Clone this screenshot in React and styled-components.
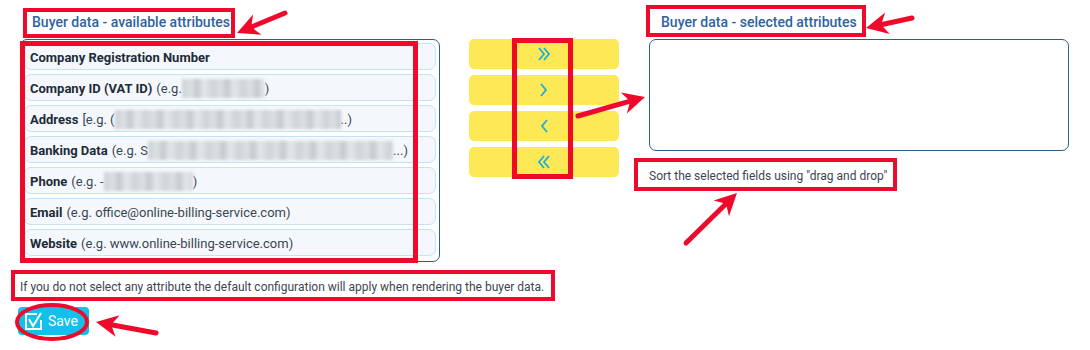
import React from "react"
import styled, { createGlobalStyle } from "styled-components"

const c = {
  BLUE: "#2c5d92",
  TITLE: "#2f62a0",
  TEXT: "#1e2b38",
  MUTED: "#3a4652",
  ROW_BG: "#f4f8fc",
  ROW_BORDER: "#c4e2f3",
  YELLOW: "#fde955",
  CYAN: "#1aaee0",
  SAVE: "#12c0ec",
  RED: "#ef0a2c",
  FONT: "Roboto, 'Liberation Sans', sans-serif",
}

const GlobalStyle = createGlobalStyle`
  body {
    margin: 0;
    background: #fff;
    font-family: ${c.FONT};
  }
`

const Page = styled.div`
  position: relative;
  width: 1090px;
  height: 350px;
  padding-left: 20px;
  box-sizing: border-box;
  overflow: hidden;
`

const Columns = styled.div`
  display: flex;
  align-items: flex-start;
`

const Column = styled.div`
  width: ${p => p.$width}px;
  margin-right: ${p => p.$gap || 0}px;
`

const Title = styled.div`
  padding: 13px 0 8px 12px;
  line-height: 18px;
  font-size: 14px;
  font-weight: 500;
  color: ${c.TITLE};
`

const Panel = styled.div`
  display: flex;
  flex-direction: column;
  gap: 4px;
  padding: 3px 3px 5px;
  border: 1px solid ${c.BLUE};
  border-radius: 7px;
  height: ${p => p.$height}px;
  box-sizing: border-box;
`

const Row = styled.div`
  display: flex;
  align-items: center;
  gap: 4px;
  height: 27px;
  padding: 1px 0 0 5px;
  box-sizing: border-box;
  background: ${c.ROW_BG};
  border: 1px solid ${c.ROW_BORDER};
  border-radius: 7px;
  font-size: 13px;
  color: ${c.MUTED};
  white-space: nowrap;
`

const Label = styled.b`
  font-weight: 700;
  color: ${c.TEXT};
`

const Example = styled.span`
  display: inline-flex;
  align-items: center;
`

const Blur = styled.span`
  display: inline-block;
  width: ${p => p.$width}px;
  height: 19px;
  background: repeating-linear-gradient(
    90deg,
    #ccd2d5 0px,
    #dce0e3 9px,
    #c2c9cd 15px,
    #e4e7e9 22px,
    #d0d6d9 30px
  );
  filter: blur(1.4px);
`

const Buttons = styled.div`
  display: flex;
  flex-direction: column;
  gap: 6px;
  padding-top: 39px;
`

const MoveButton = styled.button`
  display: flex;
  align-items: center;
  justify-content: center;
  height: 30px;
  border: 0;
  border-radius: 5px;
  background: ${c.YELLOW};
  padding: 0;
`

const Target = styled.div`
  height: 112px;
  border: 1px solid ${c.BLUE};
  border-radius: 7px;
  box-sizing: border-box;
`

const Hint = styled.div`
  font-size: 12px;
  color: ${c.MUTED};
  line-height: 16px;
  padding-top: ${p => p.$top}px;
`

const SaveButton = styled.button`
  display: flex;
  align-items: center;
  gap: 4px;
  margin: 12px 0 0 -2px;
  height: 28px;
  padding: 0 11px 0 6px;
  border: 0;
  border-radius: 4px;
  background: ${c.SAVE};
  color: #fff;
  font-family: ${c.FONT};
  font-size: 14px;
`

const Overlay = styled.svg`
  position: absolute;
  left: 0;
  top: 0;
  pointer-events: none;
`

const Chevron = ({ double, left }) => (
  <svg width="16" height="16" viewBox="0 0 16 16">
    <g fill="none" stroke={c.CYAN} strokeWidth="1.8" transform={left ? "translate(16 0) scale(-1 1)" : undefined}>
      {double ? (
        <>
          <polyline points="3,2 8,8 3,14" />
          <polyline points="8,2 13,8 8,14" />
        </>
      ) : (
        <polyline points="5,2 10,8 5,14" />
      )}
    </g>
  </svg>
)

const CheckIcon = () => (
  <svg width="20" height="20" viewBox="0 0 20 20">
    <g fill="none" stroke="#fff" strokeWidth="2">
      <polyline points="13,3 2,3 2,18 17,18 17,9" />
      <polyline points="5,8 9,15 17,2" />
    </g>
  </svg>
)

// skitch-style arrow: shaft plus notched head
const arrow = (x1, y1, x2, y2, size = 22) => {
  const dx = x2 - x1
  const dy = y2 - y1
  const len = Math.hypot(dx, dy)
  const ux = dx / len
  const uy = dy / len
  const px = -uy
  const py = ux
  const bx = x2 - ux * size
  const by = y2 - uy * size
  const nx = x2 - ux * size * 0.7
  const ny = y2 - uy * size * 0.7
  const w = size * 0.5
  return {
    line: [x1, y1, nx, ny],
    head: `${x2},${y2} ${bx + px * w},${by + py * w} ${nx},${ny} ${bx - px * w},${by - py * w}`,
  }
}

const arrows = [
  arrow(285, 13, 237, 33),
  arrow(578, 116, 645, 97),
  arrow(912, 18, 866, 28),
  arrow(686, 243, 737, 193),
  arrow(156, 333, 96, 322),
]

const boxes = [
  [23, 8, 212, 30, 4],
  [20, 41, 398, 222, 5],
  [512, 38, 61, 141, 5],
  [646, 5, 220, 32, 4],
  [634, 158, 263, 33, 4],
  [11, 270, 544, 31, 4],
]

const Annotations = () => (
  <Overlay width="1090" height="350">
    <g fill="none" stroke={c.RED}>
      {boxes.map(([x, y, w, h, s], i) => (
        <rect key={i} x={x + s / 2} y={y + s / 2} width={w - s} height={h - s} strokeWidth={s} />
      ))}
      <ellipse cx="52" cy="322" rx="35" ry="17" strokeWidth="4" />
    </g>
    {arrows.map((a, i) => (
      <g key={i}>
        <line x1={a.line[0]} y1={a.line[1]} x2={a.line[2]} y2={a.line[3]} stroke={c.RED} strokeWidth="5" strokeLinecap="round" />
        <polygon points={a.head} fill={c.RED} />
      </g>
    ))}
  </Overlay>
)

const rows = [
  { label: "Company Registration Number" },
  { label: "Company ID (VAT ID)", pre: "(e.g.", blur: 83, post: ")" },
  { label: "Address", pre: "[e.g. (", blur: 226, post: "..)" },
  { label: "Banking Data", pre: "(e.g. S", blur: 245, post: "...)" },
  { label: "Phone", pre: "(e.g. -", blur: 89, post: ")" },
  { label: "Email", pre: "(e.g. office@online-billing-service.com)" },
  { label: "Website", pre: "(e.g. www.online-billing-service.com)" },
]

export default function App() {
  return (
    <Page>
      <GlobalStyle />
      <Columns>
        <Column $width={420} $gap={29}>
          <Title>Buyer data - available attributes</Title>
          <Panel $height={223}>
            {rows.map(r => (
              <Row key={r.label}>
                <Label>{r.label}</Label>
                {r.pre && (
                  <Example>
                    {r.pre}
                    {r.blur && <Blur $width={r.blur} />}
                    {r.post}
                  </Example>
                )}
              </Row>
            ))}
          </Panel>
        </Column>
        <Column $width={150} $gap={30}>
          <Buttons>
            <MoveButton><Chevron double /></MoveButton>
            <MoveButton><Chevron /></MoveButton>
            <MoveButton><Chevron left /></MoveButton>
            <MoveButton><Chevron double left /></MoveButton>
          </Buttons>
        </Column>
        <Column $width={420}>
          <Title>Buyer data - selected attributes</Title>
          <Target />
          <Hint $top={17}>Sort the selected fields using "drag and drop"</Hint>
        </Column>
      </Columns>
      <Hint $top={17}>If you do not select any attribute the default configuration will apply when rendering the buyer data.</Hint>
      <SaveButton>
        <CheckIcon />
        Save
      </SaveButton>
      <Annotations />
    </Page>
  )
}
